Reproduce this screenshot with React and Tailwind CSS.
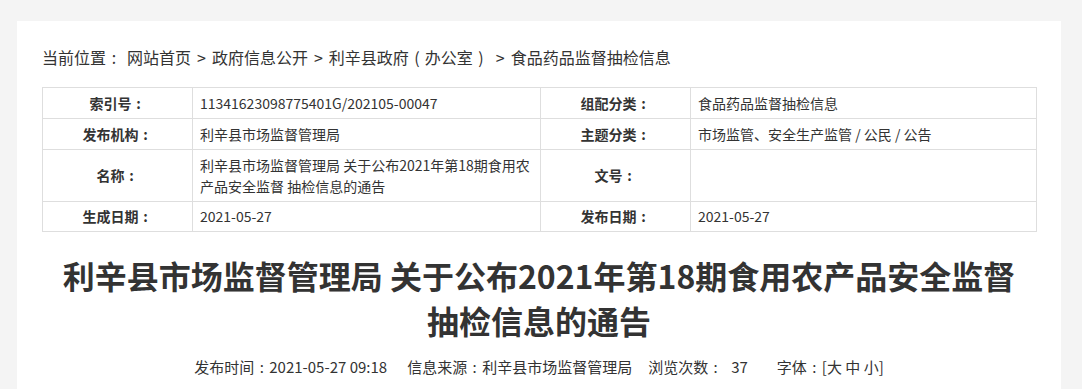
function C() {
  return <span className="inline-block w-[1em] text-center">:</span>;
}
function L() {
  return <span className="inline-block w-[1em] text-center">(</span>;
}
function R() {
  return <span className="inline-block w-[1em] text-center">)</span>;
}
function G({ extra }) {
  return <span className={extra ? "ml-[7px] mr-[6px]" : "mx-[6px]"}>&gt;</span>;
}

export default function App() {
  const font = { fontFamily: '"Noto Sans CJK SC", "Noto Sans", sans-serif' };
  const label = "w-[150px] border border-[#dedede] py-0 text-center font-bold text-[#333] leading-[21px]";
  const value = "border border-[#dedede] py-0 px-[7px] text-left text-[#333] leading-[21px]";
  return (
    <div className="min-h-[389px] bg-[#f4f4f4] pt-[21px] pl-[17px]" style={font}>
      <div className="w-[1044px] bg-white px-[25px] pt-[24px] pb-[20px]">
        <div className="text-[16px] leading-[24px] text-[#333]">
          当前位置<C />
          <span className="ml-[5px]">网站首页</span>
          <G />政府信息公开<G />利辛县政府<L />办公室<R /><G extra />食品药品监督抽检信息
        </div>
        <table className="mt-[18px] w-[995px] border-collapse text-[14px]">
          <tbody>
            <tr className="h-[31px]">
              <td className={label}>索引号<C /></td>
              <td className={value + " w-[348px]"}>11341623098775401G/202105-00047</td>
              <td className={label}>组配分类<C /></td>
              <td className={value}>食品药品监督抽检信息</td>
            </tr>
            <tr className="h-[31px]">
              <td className={label}>发布机构<C /></td>
              <td className={value}>利辛县市场监督管理局</td>
              <td className={label}>主题分类<C /></td>
              <td className={value}>市场监管、安全生产监管 / 公民 / 公告</td>
            </tr>
            <tr className="h-[52px]">
              <td className={label}>名称<C /></td>
              <td className={value}>利辛县市场监督管理局 关于公布2021年第18期食用农产品安全监督 抽检信息的通告</td>
              <td className={label}>文号<C /></td>
              <td className={value}></td>
            </tr>
            <tr className="h-[30px]">
              <td className={label}>生成日期<C /></td>
              <td className={value}>2021-05-27</td>
              <td className={label}>发布日期<C /></td>
              <td className={value}>2021-05-27</td>
            </tr>
          </tbody>
        </table>
        <h1 className="mt-[21px] text-center text-[32px] font-bold leading-[45px] text-[#333]">
          利辛县市场监督管理局 关于公布2021年第18期食用农产品安全监督
          <br />
          抽检信息的通告
        </h1>
        <div className="mt-[14px] text-center text-[15px] leading-[20px] text-[#333] whitespace-pre">
          <span>发布时间<C />2021-05-27 09:18</span>
          <span className="ml-[20px]">信息来源<C />利辛县市场监督管理局</span>
          <span className="ml-[16px]">浏览次数<C /><span className="ml-[8px]">37</span></span>
          <span className="ml-[29px]">字体<C />[大 中 小]</span>
        </div>
      </div>
    </div>
  );
}
